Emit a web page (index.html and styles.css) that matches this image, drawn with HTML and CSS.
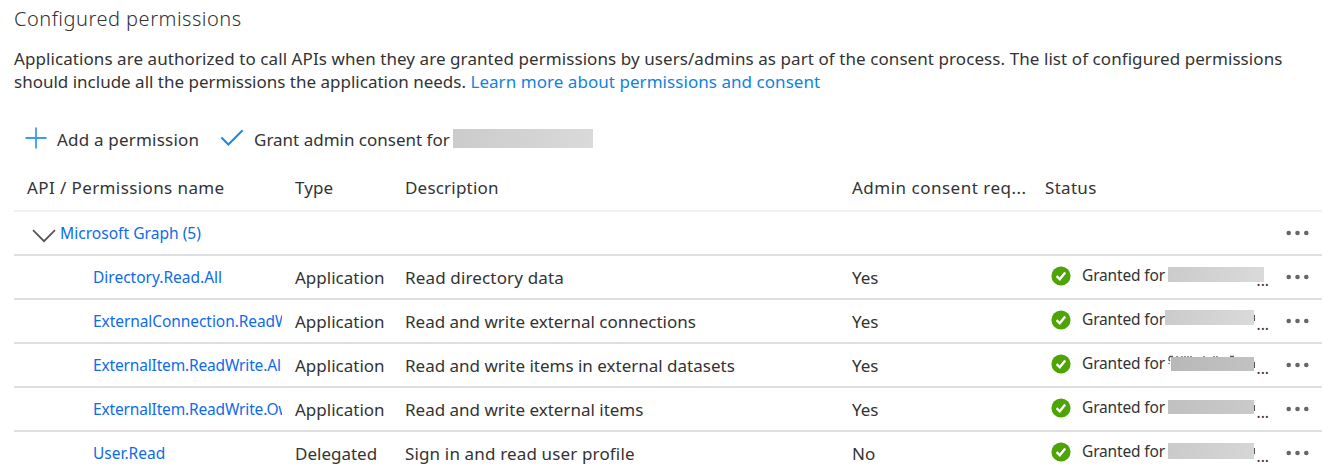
FILE: index.html
```
<!DOCTYPE html>
<html lang="en">
<head>
<meta charset="utf-8">
<title>Configured permissions</title>
<link rel="stylesheet" href="styles.css">
</head>
<body>
<svg width="0" height="0" class="defs">
  <symbol id="ok" viewBox="0 0 20 20"><circle cx="10" cy="10" r="9.6" fill="#4ea305"/><path d="M5.6 10.2 8.8 13.3 14.2 6.6" fill="none" stroke="#fff" stroke-width="2.4"/></symbol>
  <symbol id="dots" viewBox="0 0 24 6"><g fill="#666"><circle cx="2.7" cy="3" r="2.3"/><circle cx="11.5" cy="3" r="2.3"/><circle cx="20.3" cy="3" r="2.3"/></g></symbol>
</svg>
<main class="page">
  <h1 class="title"><span>Configured permissions</span></h1>
  <p class="intro"><span class="l1">Applications are authorized to call APIs when they are granted permissions by users/admins as part of the consent process. The list of configured permissions</span><br><span class="l2">should include all the permissions the application needs.</span> <a class="learn">Learn more about permissions and consent</a></p>
  <div class="toolbar">
    <svg class="plus" viewBox="0 0 22 22"><path d="M11 0.5V21.5M0.5 11H21.5" stroke="#3a9df0" stroke-width="1.8"/></svg>
    <span class="add">Add a permission</span>
    <svg class="check" viewBox="0 0 24 18"><path d="M1.4 8.5 8.4 15.5 22.6 1.3" fill="none" stroke="#1989e8" stroke-width="2"/></svg>
    <span class="grant">Grant admin consent for</span>
    <span class="mask mask-top"></span>
  </div>
  <section class="table">
    <div class="row head"><span class="name">API / Permissions name</span><span class="type">Type</span><span class="desc">Description</span><span class="admin">Admin consent req...</span><span class="state">Status</span></div>
    <div class="row group"><span class="api"><svg class="chev" viewBox="0 0 24 14"><path d="M1 1.2 12 12.2 23 1.2" fill="none" stroke="#555" stroke-width="1.7"/></svg><a>Microsoft Graph (5)</a></span><svg class="dots"><use href="#dots"/></svg></div>
    <div class="row item"><a class="perm"><span>Directory.Read.All</span></a><span class="type">Application</span><span class="desc wide">Read directory data</span><span class="admin">Yes</span><span class="status"><svg class="ok"><use href="#ok"/></svg><span class="for">Granted for</span><span class="mask m1"></span><span class="more">...</span></span><svg class="dots"><use href="#dots"/></svg></div>
    <div class="row item"><a class="perm"><span class="snug">ExternalConnection.ReadW</span></a><span class="type">Application</span><span class="desc">Read and write external connections</span><span class="admin">Yes</span><span class="status"><svg class="ok"><use href="#ok"/></svg><span class="for">Granted for</span><span class="mask m2"></span><span class="more">...</span></span><svg class="dots"><use href="#dots"/></svg></div>
    <div class="row item"><a class="perm"><span class="tight">ExternalItem.ReadWrite.Al</span></a><span class="type">Application</span><span class="desc">Read and write items in external datasets</span><span class="admin">Yes</span><span class="status"><svg class="ok"><use href="#ok"/></svg><span class="for">Granted for</span><span class="mask m3"><svg class="marks" viewBox="0 0 88 10"><path d="M5 1.5H2L1 3V5L2 6M1 8V9M9 1V2M14 1V2M17 1V2M20 1V2M23 1V2M36 1V2M46 1V2M49 1V2M62 1.5H66" fill="none" stroke="#555" stroke-width="1.3"/></svg></span><span class="more">...</span></span><svg class="dots"><use href="#dots"/></svg></div>
    <div class="row item"><a class="perm"><span class="tight">ExternalItem.ReadWrite.Ow</span></a><span class="type">Application</span><span class="desc">Read and write external items</span><span class="admin">Yes</span><span class="status"><svg class="ok"><use href="#ok"/></svg><span class="for">Granted for</span><span class="mask m4"></span><span class="more">...</span></span><svg class="dots"><use href="#dots"/></svg></div>
    <div class="row item"><a class="perm"><span>User.Read</span></a><span class="type">Delegated</span><span class="desc wide">Sign in and read user profile</span><span class="admin">No</span><span class="status"><svg class="ok"><use href="#ok"/></svg><span class="for">Granted for</span><span class="mask m5"></span><span class="more">...</span></span><svg class="dots"><use href="#dots"/></svg></div>
  </section>
</main>
</body>
</html>
```
FILE: styles.css
```
* { box-sizing: border-box; }
body { margin: 0; background: #fff; color: #333; font: 17px/23px "Noto Sans", "Open Sans", sans-serif; overflow: hidden; }
.defs { display: block; }
svg { flex: none; }
.page { width: 1324px; height: 472px; overflow: hidden; padding: 7px 2px 0 14px; white-space: nowrap; }
.title { margin: 0; font-size: 20px; font-weight: 300; line-height: 24px; letter-spacing: 0.5px; color: #333; }
.intro { margin: 16px 0 0; }
.l1 { letter-spacing: 0.075px; }
.learn { color: #0f83e0; letter-spacing: 0.05px; }
.toolbar { display: flex; align-items: center; height: 24px; margin-top: 34px; padding-left: 11px; }
.plus { width: 22px; height: 22px; margin-top: -3px; }
.add { width: 173px; padding-left: 10px; letter-spacing: 0.2px; }
.check { width: 24px; height: 18px; margin-top: -2px; }
.grant { width: 209px; padding-left: 10px; }
.mask { display: block; flex: none; background: linear-gradient(100deg, #cbcbcb, #dadada); }
.mask-top { width: 140px; height: 19px; margin-top: -2px; }
.table { margin-top: 15px; }
.row { display: grid; grid-template-columns: 268px 110px 447px 193px 254px 1fr; align-items: center; height: 44px; border-bottom: 2px solid #dfdfdf; }
.head { height: 46px; padding-bottom: 2px; border-bottom: 2px solid #f1f1f1; }
.name { padding-left: 13px; letter-spacing: 0.4px; }
.type, .desc, .admin, .state { padding-left: 13px; }
.item > .type, .item > .desc, .item > .admin { padding-top: 1px; }
.wide { letter-spacing: 0.15px; }
.head .type { letter-spacing: 0.1px; }
.head .desc { letter-spacing: 0.2px; }
.head .admin { letter-spacing: 0.5px; }
.head .state { letter-spacing: 0.3px; }
.group { grid-template-columns: 1fr 36px; }
.api { display: flex; align-items: center; padding-left: 18px; color: #0f6bea; font-size: 15.6px; }
.chev { width: 24px; height: 14px; margin: 5px 4px 0 0; }
.perm { margin-left: 79px; width: 189px; overflow: hidden; color: #0f6bea; font-size: 15.5px; }
.snug { letter-spacing: -0.07px; }
.tight { letter-spacing: -0.16px; }
.dots { width: 24px; height: 6px; }
.status { display: flex; align-items: flex-start; height: 42px; padding-left: 19px; font-size: 15.5px; }
.ok { width: 20px; height: 20px; margin-top: 10px; }
.for { width: 97px; padding-left: 11px; margin-top: 8px; letter-spacing: -0.15px; }
.more { margin: 13px 0 0 auto; padding-right: 17px; }
.m1 { width: 96px; height: 15px; margin: 11px -8px 0 0; }
.m2 { width: 89px; height: 15px; margin: 10px 0 0 -3px; }
.m3 { width: 83px; height: 14px; margin: 13px 0 0 3px; background: linear-gradient(100deg, #b8b8b8, #c2c2c2); }
.m4 { width: 86px; height: 14px; margin-top: 12px; background: linear-gradient(100deg, #c0c0c0, #cacaca); }
.m5 { width: 86px; height: 16px; margin-top: 11px; background: linear-gradient(100deg, #cacaca, #d6d6d6); }
.m2, .m3, .m4, .m5 { position: relative; }
/* sliver of a letter showing past the mask's right end */
.m2::after, .m3::after, .m4::after, .m5::after { content: ""; position: absolute; left: 100%; top: 5px; width: 1px; height: 6px; background: #555; }
.marks { display: block; width: 88px; height: 10px; margin: -2px 0 0 -3px; clip-path: polygon(0 0, 100% 0, 100% 20%, 3px 20%, 3px 100%, 0 100%); }
```
